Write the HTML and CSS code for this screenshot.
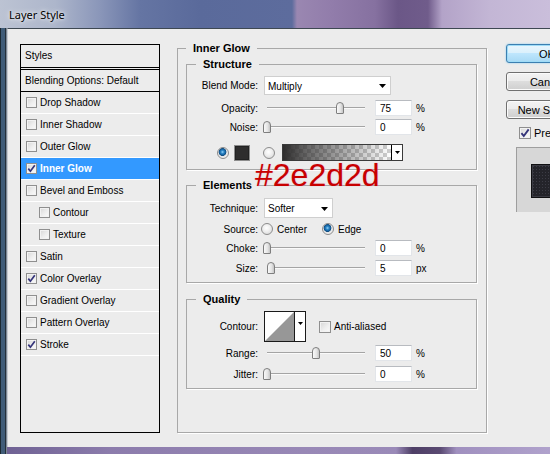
FILE: index.html
```html
<!DOCTYPE html>
<html>
<head>
<meta charset="utf-8">
<title>Layer Style</title>
<link rel="stylesheet" href="styles.css">
</head>
<body>
<div class="dialog">
  <div class="titlebar"><span class="title">Layer Style</span></div>
  <div class="frame">
    <div class="client">
      <div class="styles-panel">
        <div class="sp-head">Styles</div>
        <div class="sp-blend">Blending Options: Default</div>
        <div class="sp-item"><span class="cb"></span><span>Drop Shadow</span></div>
        <div class="sp-item"><span class="cb"></span><span>Inner Shadow</span></div>
        <div class="sp-item"><span class="cb"></span><span>Outer Glow</span></div>
        <div class="sp-item sel"><span class="cb"><svg viewBox="0 0 9 9" width="9" height="9"><path d="M1.3 4.6 L3.4 7.2 L7.8 1.2" fill="none" stroke="#34347a" stroke-width="1.7"/></svg></span><span>Inner Glow</span></div>
        <div class="sp-item"><span class="cb"></span><span>Bevel and Emboss</span></div>
        <div class="sp-item sub"><span class="cb"></span><span>Contour</span></div>
        <div class="sp-item sub"><span class="cb"></span><span>Texture</span></div>
        <div class="sp-item"><span class="cb"></span><span>Satin</span></div>
        <div class="sp-item"><span class="cb"><svg viewBox="0 0 9 9" width="9" height="9"><path d="M1.3 4.6 L3.4 7.2 L7.8 1.2" fill="none" stroke="#34347a" stroke-width="1.7"/></svg></span><span>Color Overlay</span></div>
        <div class="sp-item"><span class="cb"></span><span>Gradient Overlay</span></div>
        <div class="sp-item"><span class="cb"></span><span>Pattern Overlay</span></div>
        <div class="sp-item"><span class="cb"><svg viewBox="0 0 9 9" width="9" height="9"><path d="M1.3 4.6 L3.4 7.2 L7.8 1.2" fill="none" stroke="#34347a" stroke-width="1.7"/></svg></span><span>Stroke</span></div>
      </div>

      <fieldset class="grp outer">
        <legend>Inner Glow</legend>

        <fieldset class="grp inner structure">
          <legend>Structure</legend>
          <div class="row h19">
            <span class="lbl">Blend Mode:</span>
            <div class="select w-blend"><span>Multiply</span><svg class="arr" viewBox="0 0 7 4" width="7" height="4"><path d="M0 0 H7 L3.5 4Z" fill="#000"/></svg></div>
          </div>
          <div class="row h16 mt5">
            <span class="lbl">Opacity:</span>
            <div class="slider"><div class="track"></div><div class="thumb" style="left:78px"></div></div>
            <div class="num">75</div><span class="unit">%</span>
          </div>
          <div class="row h16 mt3">
            <span class="lbl">Noise:</span>
            <div class="slider"><div class="track"></div><div class="thumb" style="left:5px"></div></div>
            <div class="num">0</div><span class="unit">%</span>
          </div>
          <div class="row colorrow">
            <span class="radio on"></span>
            <span class="swatch"></span>
            <span class="radio r2"></span>
            <div class="gradbox"><div class="gradfill"></div><div class="gdd"><svg viewBox="0 0 5 3" width="5" height="3"><path d="M0 0 H5 L2.5 3Z" fill="#000"/></svg></div></div>
          </div>
        </fieldset>

        <fieldset class="grp inner elements">
          <legend>Elements</legend>
          <div class="row h20">
            <span class="lbl">Technique:</span>
            <div class="select w-tech"><span>Softer</span><svg class="arr" viewBox="0 0 7 4" width="7" height="4"><path d="M0 0 H7 L3.5 4Z" fill="#000"/></svg></div>
          </div>
          <div class="row h14 mt4">
            <span class="lbl">Source:</span>
            <span class="opt o1"><span class="radio"></span><span>Center</span></span>
            <span class="opt"><span class="radio on"></span><span>Edge</span></span>
          </div>
          <div class="row h16 mt4">
            <span class="lbl">Choke:</span>
            <div class="slider"><div class="track"></div><div class="thumb" style="left:5px"></div></div>
            <div class="num">0</div><span class="unit">%</span>
          </div>
          <div class="row h16 mt4">
            <span class="lbl">Size:</span>
            <div class="slider"><div class="track"></div><div class="thumb" style="left:9px"></div></div>
            <div class="num">5</div><span class="unit">px</span>
          </div>
        </fieldset>

        <fieldset class="grp inner quality">
          <legend>Quality</legend>
          <div class="row h31">
            <span class="lbl">Contour:</span>
            <div class="contour">
              <svg class="cthumb" viewBox="0 0 29 29" width="29" height="29"><rect width="29" height="29" fill="#fff"/><path d="M0 29 L29 0 V29Z" fill="#979797"/></svg>
              <div class="cdd"><svg viewBox="0 0 5 3" width="5" height="3"><path d="M0 0 H5 L2.5 3Z" fill="#000"/></svg></div>
            </div>
            <span class="cb big aa"></span><span class="aa-lbl">Anti-aliased</span>
          </div>
          <div class="row h16 mt3">
            <span class="lbl">Range:</span>
            <div class="slider"><div class="track"></div><div class="thumb" style="left:54px"></div></div>
            <div class="num">50</div><span class="unit">%</span>
          </div>
          <div class="row h16 mt5">
            <span class="lbl">Jitter:</span>
            <div class="slider"><div class="track"></div><div class="thumb" style="left:5px"></div></div>
            <div class="num">0</div><span class="unit">%</span>
          </div>
        </fieldset>
      </fieldset>

      <div class="actions">
        <div class="btn def">OK</div>
        <div class="btn">Cancel</div>
        <div class="btn last">New Style...</div>
        <div class="prev-row"><span class="cb big"><svg viewBox="0 0 9 9" width="10" height="10"><path d="M1.3 4.6 L3.4 7.2 L7.8 1.2" fill="none" stroke="#34347a" stroke-width="1.7"/></svg></span><span class="prev-lbl">Preview</span></div>
        <div class="preview"><div class="psq"></div></div>
      </div>
    </div>
  </div>
  <div class="annot">#2e2d2d</div>
</div>
</body>
</html>
```
FILE: styles.css
```css
* { box-sizing: border-box; }
html, body { margin: 0; padding: 0; }
body {
  width: 550px;
  height: 454px;
  overflow: hidden;
  font-family: "Liberation Sans", Arial, sans-serif;
  font-size: 10px;
  color: #000;
  background: #8a7aa8;
}
.dialog {
  position: relative;
  width: 550px;
  height: 454px;
  display: flex;
  flex-direction: column;
}
.titlebar {
  height: 28px;
  flex: none;
  display: flex;
  align-items: center;
  padding-left: 9px;
  background: linear-gradient(90deg, #bcc3d3 0, #adb6cb 55px, #8a96b9 100px, #6575a3 140px, #5a6a9b 200px, #5d6c9d 292px, #9a87b1 297px, #927dab 330px, #8671a0 375px, #6b5787 398px, #705c8b 428px, #b3a3c8 442px, #c3b6d5 490px, #cabedb 550px);
}
.title {
  font-family: "Noto Sans", "Liberation Sans", sans-serif;
  font-size: 11px;
  color: #000;
  text-shadow: 0 0 6px #fff, 0 0 3px rgba(255,255,255,.8);
}
.frame {
  flex: 1;
  display: flex;
  padding: 0 0 7px 7px;
  background:
    linear-gradient(90deg, #1c2931 0 1px, #405c78 1px 5px, #25303a 5px 6px, #7d8895 6px 7px) left top / 7px 100% no-repeat,
    linear-gradient(90deg, #6d6092 0, #8c7cac 20%, #9888b6 55%, #9a8ab8 72%, #4e3f66 75%, #5a4a72 80%, #a090bf 83%, #b0a2cc 100%);
}
.client {
  flex: 1;
  display: flex;
  align-items: flex-start;
  background: #ececec;
  border-top: 1px solid #3e4852;
  border-left: 1px solid #c6cacf;
  padding: 12px 0 0 12px;
}

/* styles panel */
.styles-panel {
  flex: none;
  width: 140px;
  height: 389px;
  margin-top: 3px;
  border: 1px solid #000;
}
.sp-head {
  height: 25px;
  line-height: 22px;
  padding-left: 4px;
  border-bottom: 3px double #000;
}
.sp-blend {
  height: 22px;
  line-height: 21px;
  padding-left: 4px;
  border-bottom: 1px solid #000;
}
.sp-item {
  height: 22px;
  display: flex;
  align-items: center;
  padding-left: 5px;
  border-bottom: 1px solid #fff;
}
.sp-item .cb { margin-right: 3px; }
.sp-item.sub { padding-left: 18px; }
.sp-item.sel {
  background: #3399ff;
  color: #fff;
  font-weight: bold;
}

.cb {
  flex: none;
  width: 11px;
  height: 11px;
  border: 1px solid #8f8f8f;
  background: linear-gradient(135deg, #d6d6d6 0, #eeeeee 55%, #fbfbfb 100%);
  box-shadow: inset 0 0 0 1px #f2f2f2;
  display: inline-flex;
  align-items: center;
  justify-content: center;
}
.cb.big { width: 12px; height: 12px; }

/* group boxes */
fieldset {
  margin: 0;
  padding: 0;
  min-width: 0;
  border: 1px solid #a8a8a8;
}
legend {
  padding: 0 7px;
  font-size: 11px;
  font-weight: bold;
  line-height: 14px;
}
.outer {
  flex: none;
  width: 310px;
  height: 392px;
  margin-left: 17px;
  padding: 2px 0 0 8px;
  box-shadow: 1px 1px 0 #fff;
}
.inner {
  width: 291px;
  box-shadow: 1px 1px 0 #fff;
}
.inner legend { margin-left: 9px; }
.structure { padding: 5px 0 8px 0; }
.elements { margin-top: 8px; padding: 6px 0 6px 0; }
.quality { margin-top: 9px; padding: 5px 0 6px 0; }

.row { display: flex; align-items: center; }
.h14 { height: 14px; }
.h16 { height: 16px; }
.h19 { height: 19px; }
.h20 { height: 20px; }
.h31 { height: 31px; }
.mt3 { margin-top: 3px; }
.mt4 { margin-top: 4px; }
.mt5 { margin-top: 5px; }
.lbl {
  flex: none;
  width: 71px;
  text-align: right;
}

.select {
  flex: none;
  margin-left: 6px;
  height: 100%;
  background: #fff;
  border: 1px solid #cfcfcf;
  display: flex;
  align-items: center;
  justify-content: space-between;
  padding: 1px 4px 0 3px;
}
.w-blend { width: 127px; }
.w-tech { width: 69px; }

.slider {
  position: relative;
  flex: none;
  width: 117px;
  height: 16px;
}
.track {
  margin: 7px 0 0 9px;
  width: 98px;
  height: 2px;
  border-top: 1px solid #a4a4a4;
  background: #fafafa;
}
.thumb {
  position: absolute;
  top: 2px;
  width: 8px;
  height: 12px;
  border: 1px solid #7e7e7e;
  border-radius: 4px 4px 1px 1px;
  background: linear-gradient(90deg, #f8f8f8 0, #e4e4e4 60%, #c4c4c4 100%);
}
.num {
  flex: none;
  width: 37px;
  height: 16px;
  line-height: 15px;
  padding-left: 4px;
  background: #fff;
  border: 1px solid #e2e5e9;
  border-top-color: #b8bbc0;
}
.unit { margin-left: 4px; }

.colorrow {
  height: 17px;
  margin-top: 9px;
  padding-left: 30px;
}
.radio {
  flex: none;
  width: 12px;
  height: 12px;
  border-radius: 50%;
  border: 1px solid #8c8c8c;
  background: radial-gradient(circle at 45% 40%, #ffffff 0, #f0f0f0 40%, #d2d2d2 100%);
}
.radio.on {
  background: radial-gradient(circle at 45% 40%, #9ad4f6 0, #2a86c8 1.6px, #155f9c 3px, #0e4a7e 3.6px, #e6e6e6 4.2px, #f6f6f6 100%);
}
.swatch {
  flex: none;
  width: 16px;
  height: 16px;
  margin-left: 5px;
  border: 1px solid #8d8d8d;
  background: #2e2d2d;
  box-shadow: inset 0 0 0 1px #222;
}
.r2 { margin-left: 13px; }
.gradbox {
  flex: none;
  width: 121px;
  height: 17px;
  margin-left: 7px;
  border: 1px solid #3a3a3a;
  display: flex;
}
.gradfill {
  flex: 1;
  background:
    linear-gradient(90deg, rgba(46,45,45,1) 0, rgba(46,45,45,.75) 20%, rgba(46,45,45,0) 100%),
    conic-gradient(#cfcfcf 25%, #fff 0 50%, #cfcfcf 0 75%, #fff 0) 0 0 / 8px 8px;
}
.gdd {
  flex: none;
  width: 11px;
  border-left: 1px solid #000;
  background: #fff;
  display: flex;
  align-items: center;
  justify-content: center;
}

.opt {
  display: inline-flex;
  align-items: center;
}
.opt .radio { margin-right: 4px; }
.o1 { margin-left: 3px; width: 61px; }

.contour {
  flex: none;
  margin-left: 6px;
  width: 42px;
  height: 31px;
  border: 1px solid #1a1a1a;
  display: flex;
  background: #fff;
}
.cthumb { display: block; flex: none; }
.cdd {
  flex: 1;
  border-left: 1px solid #1a1a1a;
  display: flex;
  justify-content: center;
  padding-top: 10px;
}
.aa { margin-left: 13px; }
.aa-lbl { margin-left: 3px; }

/* right column */
.actions {
  flex: none;
  width: 90px;
  margin: 3px 0 0 19px;
  display: flex;
  flex-direction: column;
}
.btn {
  width: 82px;
  height: 19px;
  margin-bottom: 9px;
  border: 1px solid #707070;
  border-radius: 3px;
  background: linear-gradient(#f3f3f3 0, #ebebeb 50%, #dddddd 50%, #cfcfcf 100%);
  box-shadow: inset 0 0 0 1px #fbfbfb;
  font-size: 11px;
  display: flex;
  align-items: center;
  justify-content: center;
}
.btn.def {
  border-color: #3c7fb1;
  background: linear-gradient(#eaf6fd 0, #d9f0fc 50%, #bee6fd 50%, #a7d9f5 100%);
  box-shadow: inset 0 0 0 1px #9fdcf7, 0 0 2px #7fc8ee;
}
.btn.last { margin-bottom: 8px; }
.prev-row {
  display: flex;
  align-items: center;
  height: 12px;
  padding-left: 13px;
  font-size: 11px;
}
.prev-lbl { margin-left: 3px; }
.preview {
  margin: 8px 0 0 10px;
  width: 80px;
  height: 65px;
  background: #d7d7d7;
  border-left: 1px solid #9e9e9e;
  border-top: 1px solid #9e9e9e;
  padding: 16px 0 0 14px;
}
.psq {
  width: 34px;
  height: 34px;
  border: 1px solid #101012;
  background:
    radial-gradient(circle, rgba(70,70,80,.7) 0.6px, transparent 0.9px) 0 0 / 3px 3px,
    #24242a;
  box-shadow: inset 0 0 0 1px #3a3a42;
}

.annot {
  position: absolute;
  left: 255px;
  top: 159px;
  font-family: "Liberation Sans", Arial, sans-serif;
  font-size: 32px;
  line-height: 32px;
  color: #c80000;
  text-shadow: 0 0 1px rgba(230,60,120,.5);
}
```
